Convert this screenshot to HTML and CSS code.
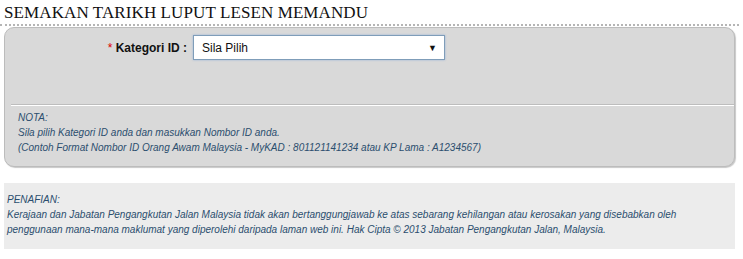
FILE: index.html
```html
<!DOCTYPE html>
<html lang="en">
<head>
  <meta charset="UTF-8">
  <title>Semakan Tarikh Luput Lesen Memandu</title>
  <link rel="stylesheet" href="styles.css">
</head>
<body>
  <div class="page">
    <h1 class="title">SEMAKAN TARIKH LUPUT LESEN MEMANDU</h1>

    <div class="panel">
      <div class="form-row">
        <label class="label"><span class="req">*</span> Kategori ID :</label>
        <div class="select">
          <span>Sila Pilih</span>
          <span class="arrow">&#9660;</span>
        </div>
      </div>

      <div class="note">
        NOTA:<br>
        Sila pilih Kategori ID anda dan masukkan Nombor ID anda.<br>
        (Contoh Format Nombor ID Orang Awam Malaysia - MyKAD : 801121141234 atau KP Lama : A1234567)
      </div>
    </div>

    <div class="disclaimer">
      PENAFIAN:<br>
      Kerajaan dan Jabatan Pengangkutan Jalan Malaysia tidak akan bertanggungjawab ke atas sebarang kehilangan atau kerosakan yang disebabkan oleh
      penggunaan mana-mana maklumat yang diperolehi daripada laman web ini. Hak Cipta &copy; 2013 Jabatan Pengangkutan Jalan, Malaysia.
    </div>
  </div>
</body>
</html>
```

FILE: styles.css
```css
body {
  margin: 0;
  background-color: #fff;
  font-family: 'Liberation Sans', Arial, sans-serif;
}

.page {
  width: 735px;
  padding: 4px 0 0 4px;
}

.title {
  margin: 0 0 0 -4px;
  padding: 0 0 2px 4px;
  font-family: 'Liberation Serif', serif;
  font-weight: normal;
  font-size: 17px;
  letter-spacing: 0.1px;
  line-height: 18px;
  color: #111;
  border-bottom: 2px dotted #b5b5b5;
}

.panel {
  margin-top: 1px;
  width: 729px;
  background-color: #d9d9d9;
  border: 1px solid #bcbcbc;
  border-radius: 10px;
  box-shadow: 1px 1px 1px #c8c8c8;
}

.form-row {
  display: flex;
  align-items: flex-start;
  height: 69px;
  padding-top: 7px;
  margin-left: 6px;
  border-bottom: 1px solid #bdbdbd;
  box-shadow: 0 1px 0 #fff;
}

.label {
  width: 182px;
  box-sizing: border-box;
  padding: 6px 6px 0 0;
  text-align: right;
  font-size: 12px;
  font-weight: bold;
  color: #111;
}

.req {
  color: #d00;
  font-weight: normal;
}

.select {
  width: 252px;
  height: 25px;
  box-sizing: border-box;
  display: flex;
  align-items: center;
  justify-content: space-between;
  padding: 0 7px 0 8px;
  background-color: #fff;
  border: 1px solid #7f9db9;
  box-shadow: 0 0 2px #9ab4d8;
  font-size: 12px;
  color: #111;
}

.arrow {
  font-size: 9px;
}

.note {
  padding: 5px 0 11px 13px;
  font-size: 10px;
  font-style: italic;
  line-height: 15px;
  color: #2b4e6e;
}

.disclaimer {
  margin-top: 16px;
  width: 725px;
  padding: 9px 3px 12px 3px;
  background-color: #ececec;
  font-size: 10px;
  font-style: italic;
  line-height: 15px;
  color: #2b4e6e;
}
```
